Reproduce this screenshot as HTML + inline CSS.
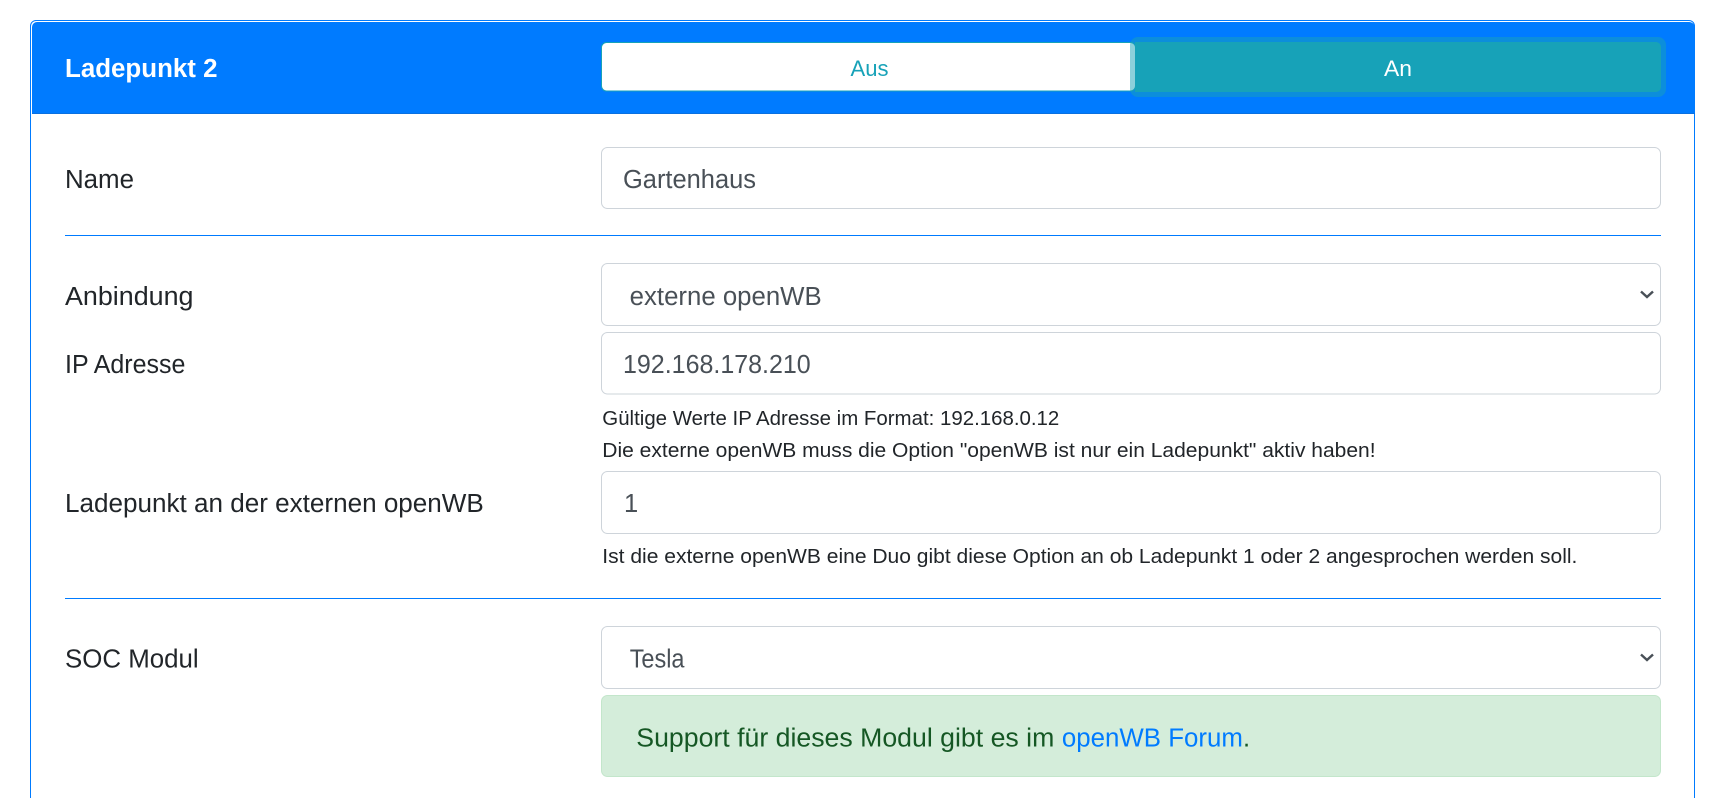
<!DOCTYPE html>
<html lang="de"><head><meta charset="utf-8"><title>Ladepunkt 2</title>
<style>
html,body{margin:0;padding:0;background:#fff;width:1720px;height:798px;overflow:hidden}
svg{display:block;position:absolute;left:0;top:0}
text{font-family:"Liberation Sans",Arial,sans-serif;font-size:25.5px;fill:#212529}
.i{fill:#495057}
.s{font-size:20.5px}
</style></head><body>
<svg width="1720" height="798" viewBox="0 0 1720 798" xmlns="http://www.w3.org/2000/svg">
<rect width="1720" height="798" fill="#fff"/>
<path d="M30.500 830V26a5.500 5.500 0 0 1 5.500-5.500H1689a5.500 5.500 0 0 1 5.500 5.500V830" fill="none" stroke="#007bff"/>
<path d="M32 114V27a5 5 0 0 1 5-5H1689a6 6 0 0 1 6 6V114z" fill="#007bff"/>
<rect x="32" y="113" width="1663" height="1" fill="#0a70e0"/>
<text x="65" y="77" textLength="152.500" lengthAdjust="spacingAndGlyphs" style="font-weight:700;fill:#fff">Ladepunkt 2</text>

<rect x="601.500" y="42.500" width="534" height="48.500" rx="5" fill="#fff" stroke="#17a2b8"/>
<rect x="1130" y="37" width="536" height="60" rx="8" fill="#17a2b8" fill-opacity=".5"/>
<rect x="1135" y="42" width="526" height="50" fill="#17a2b8" rx="5"/>
<rect x="1135" y="42" width="6" height="50" fill="#17a2b8"/>
<text x="850.500" y="76" textLength="38" lengthAdjust="spacingAndGlyphs" style="font-size:22px;fill:#17a2b8">Aus</text>
<text x="1384" y="76" textLength="28" lengthAdjust="spacingAndGlyphs" style="font-size:22px;fill:#fff">An</text>

<text x="65" y="188" textLength="69" lengthAdjust="spacingAndGlyphs">Name</text>
<rect x="601.500" y="147.500" width="1059" height="61" rx="6" fill="#fff" stroke="#ced4da"/>
<text class="i" x="623" y="188" textLength="133" lengthAdjust="spacingAndGlyphs">Gartenhaus</text>

<rect x="65" y="235" width="1596" height="1" fill="#007bff"/>

<text x="65" y="305" textLength="128.500" lengthAdjust="spacingAndGlyphs">Anbindung</text>
<rect x="601.500" y="263.500" width="1059" height="62" rx="6" fill="#fff" stroke="#ced4da"/>
<text class="i" x="629.700" y="305" textLength="192" lengthAdjust="spacingAndGlyphs">externe openWB</text>
<path d="M1641 291.500l6 5.500 6-5.500" fill="none" stroke="#495057" stroke-width="2.400"/>

<text x="65" y="373" textLength="120.400" lengthAdjust="spacingAndGlyphs">IP Adresse</text>
<rect x="601.500" y="332.500" width="1059" height="61.500" rx="6" fill="#fff" stroke="#ced4da"/>
<text class="i" x="623" y="373" textLength="187.700" lengthAdjust="spacingAndGlyphs">192.168.178.210</text>
<text class="s" x="602.300" y="425" textLength="457" lengthAdjust="spacingAndGlyphs">Gültige Werte IP Adresse im Format: 192.168.0.12</text>
<text class="s" x="602.300" y="457" textLength="773.300" lengthAdjust="spacingAndGlyphs">Die externe openWB muss die Option "openWB ist nur ein Ladepunkt" aktiv haben!</text>

<text x="65" y="512" textLength="418.800" lengthAdjust="spacingAndGlyphs">Ladepunkt an der externen openWB</text>
<rect x="601.500" y="471.500" width="1059" height="62" rx="6" fill="#fff" stroke="#ced4da"/>
<text class="i" x="624" y="512">1</text>
<text class="s" x="602.300" y="563" textLength="975.100" lengthAdjust="spacingAndGlyphs">Ist die externe openWB eine Duo gibt diese Option an ob Ladepunkt 1 oder 2 angesprochen werden soll.</text>

<rect x="65" y="598" width="1596" height="1" fill="#007bff"/>

<text x="65" y="667.500" textLength="133.600" lengthAdjust="spacingAndGlyphs">SOC Modul</text>
<rect x="601.500" y="626.500" width="1059" height="62" rx="6" fill="#fff" stroke="#ced4da"/>
<text class="i" x="629.700" y="667.500" textLength="54.800" lengthAdjust="spacingAndGlyphs">Tesla</text>
<path d="M1641 654.500l6 5.500 6-5.500" fill="none" stroke="#495057" stroke-width="2.400"/>

<rect x="601.500" y="695.500" width="1059" height="81" rx="6" fill="#d4edda" stroke="#c3e6cb"/>
<text x="636.300" y="746.700" textLength="418" lengthAdjust="spacingAndGlyphs" style="fill:#155724">Support für dieses Modul gibt es im</text>
<text x="1061.900" y="746.700" textLength="181" lengthAdjust="spacingAndGlyphs" style="fill:#007bff">openWB Forum</text>
<text x="1243" y="746.700" style="fill:#155724">.</text>
</svg>
</body></html>
